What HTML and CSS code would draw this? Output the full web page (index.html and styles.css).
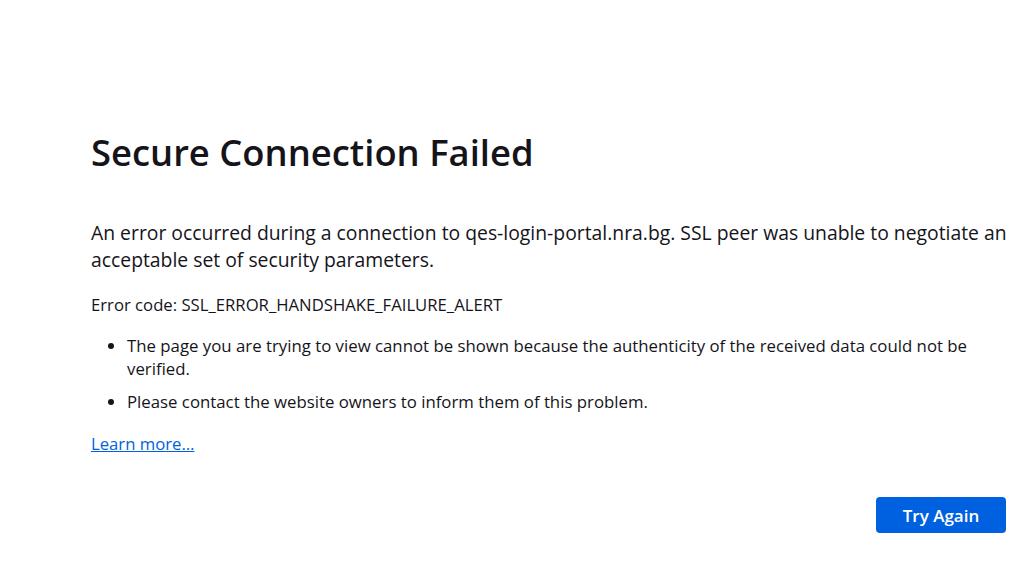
FILE: index.html
```html
<!DOCTYPE html>
<html lang="en">
<head>
<meta charset="utf-8">
<title>Secure Connection Failed</title>
<link rel="stylesheet" href="styles.css">
</head>
<body>
<main class="page">
  <div class="container">
    <h1 class="title">Secure Connection Failed</h1>
    <p class="intro">An error occurred during a connection to qes-login-portal.nra.bg. SSL peer was unable to negotiate an acceptable set of security parameters.</p>
    <p class="code">Error code: SSL_ERROR_HANDSHAKE_FAILURE_ALERT</p>
    <ul class="list">
      <li>The page you are trying to view cannot be shown because the authenticity of the received data could not be verified.</li>
      <li>Please contact the website owners to inform them of this problem.</li>
    </ul>
    <p class="learn"><a href="#" class="learn-link">Learn more…</a></p>
    <div class="actions">
      <button class="btn-primary" type="button">Try Again</button>
    </div>
  </div>
</main>
</body>
</html>
```
FILE: styles.css
```css
html, body {
  margin: 0;
  padding: 0;
  background: #ffffff;
}
body {
  font-family: "Open Sans", "Noto Sans", sans-serif;
  color: #15141a;
}
.page {
  padding: 129px 12px 0 91px;
}
.container {
  width: 921px;
}
.title {
  margin: 0;
  font-size: 36.4px;
  line-height: 46px;
  font-weight: 600;
}
.intro {
  margin: 44px 0 0;
  font-size: 19.35px;
  line-height: 27px;
}
.code {
  margin: 20px 0 0;
  font-size: 16.7px;
  line-height: 23px;
}
.list {
  margin: 18px 0 0;
  padding-left: 36px;
  font-size: 16.8px;
  line-height: 23px;
}
.list li + li {
  margin-top: 10px;
}
.learn {
  margin: 18.5px 0 0;
  font-size: 16.7px;
  line-height: 23px;
}
.learn-link {
  color: #0061e0;
  text-decoration: underline;
}
.actions {
  margin-top: 42.5px;
  display: flex;
  justify-content: flex-end;
  padding-right: 6px;
}
.btn-primary {
  width: 130px;
  height: 36px;
  border: 0;
  border-radius: 4px;
  background: #0061e0;
  color: #ffffff;
  font-family: inherit;
  font-size: 17px;
  font-weight: 600;
  padding: 0;
}
```
